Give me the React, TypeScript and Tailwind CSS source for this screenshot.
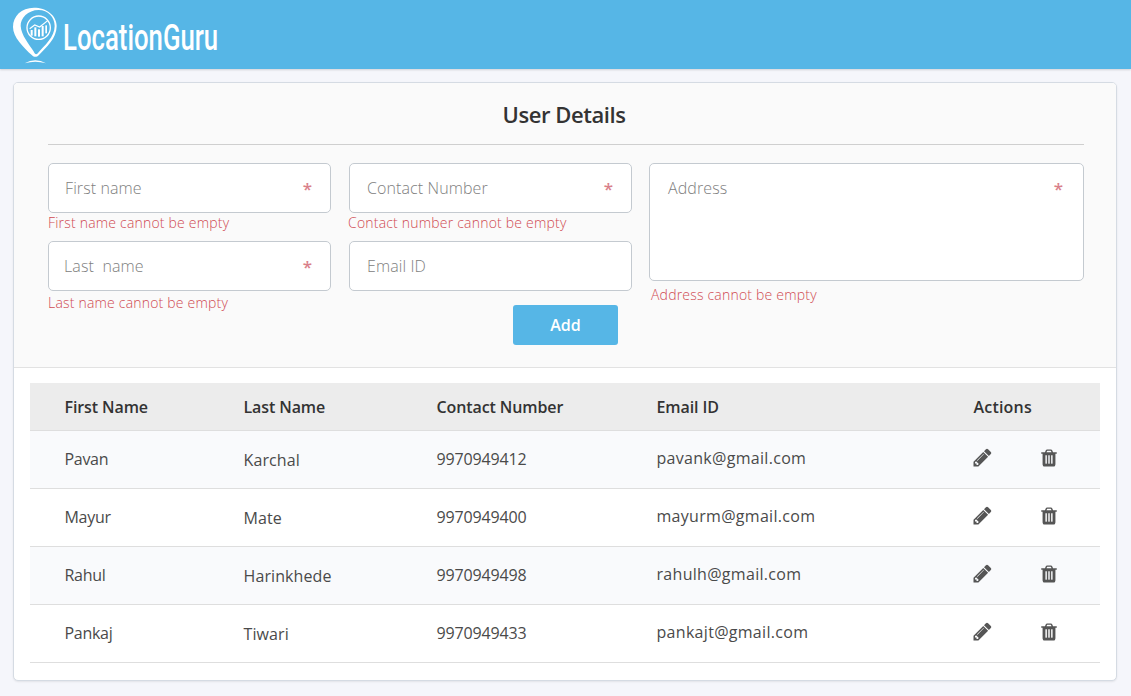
import React from "react";

const font = { fontFamily: '"Open Sans", sans-serif' };

function Logo() {
  return (
    <svg width="60" height="66" viewBox="0 0 180 198" className="mt-[2px] shrink-0 self-start">
      <path
        fill="#fff"
        fillRule="evenodd"
        d="M78 17C40 17 15 42 15 75C15 105 45 135 72 160C78 166 86 166 92 160C115 135 146 110 146 72C146 40 115 17 78 17ZM92 24C120 24 140 45 140 72C140 105 110 130 88 155C84 158 80 156 78 150C62 125 40 100 38 72C37 48 60 24 92 24Z"
      />
      <circle cx="92" cy="77" r="35" fill="none" stroke="#fff" strokeWidth="4" />
      <g fill="#fff">
        <rect x="68" y="84" width="6" height="17" />
        <rect x="79" y="76" width="6" height="27" />
        <rect x="90" y="82" width="6" height="22" />
        <rect x="101" y="72" width="6" height="31" />
        <rect x="112" y="70" width="5" height="24" />
      </g>
      <path d="M65 80L80 69L95 75L119 56" fill="none" stroke="#fff" strokeWidth="3.500" />
      <path d="M50 184Q82 166 114 184Q82 175 50 184Z" fill="#fff" />
    </svg>
  );
}

function Pencil() {
  return (
    <svg width="21" height="21" viewBox="0 0 1792 1792" fill="#555" className="ml-[-2px]">
      <path d="M491 1536l91-91-235-235-91 91v107h128v128h107zm523-928q0-22-22-22-10 0-17 7l-542 542q-7 7-7 17 0 22 22 22 10 0 17-7l542-542q7-7 7-17zm-54-192l416 416-832 832h-416v-416zm683 96q0 53-37 90l-166 166-416-416 166-165q36-38 90-38 53 0 91 38l235 234q37 39 37 91z" />
    </svg>
  );
}

function Trash() {
  return (
    <svg width="20" height="20" viewBox="0 0 1792 1792" fill="#555">
      <path d="M704 1376v-704q0-14-9-23t-23-9h-64q-14 0-23 9t-9 23v704q0 14 9 23t23 9h64q14 0 23-9t9-23zm256 0v-704q0-14-9-23t-23-9h-64q-14 0-23 9t-9 23v704q0 14 9 23t23 9h64q14 0 23-9t9-23zm256 0v-704q0-14-9-23t-23-9h-64q-14 0-23 9t-9 23v704q0 14 9 23t23 9h64q14 0 23-9t9-23zm-544-992h448l-48-117q-7-9-17-11h-317q-10 2-17 11zm928 32v64q0 14-9 23t-23 9h-96v948q0 83-47 143.500t-113 60.500h-832q-66 0-113-58.500t-47-141.500v-952h-96q-14 0-23-9t-9-23v-64q0-14 9-23t23-9h309l70-167q15-37 54-63t79-26h320q40 0 79 26t54 63l70 167h309q14 0 23 9t9 23z" />
    </svg>
  );
}

function Field({
  label,
  required = true,
  tall = false,
  inset = "pl-[17px]",
}: {
  label: string;
  required?: boolean;
  tall?: boolean;
  inset?: string;
}) {
  return (
    <div
      className={`flex items-start justify-between rounded-[5px] border border-[#c4cad0] bg-white pt-[12px] ${inset} ${tall ? "h-[118px] pr-[20px]" : "h-[50px] pr-[18px]"}`}
    >
      <span className="whitespace-pre text-[16px] font-light leading-[24px] tracking-[0.1px] text-[#808080]">{label}</span>
      {required && <span className="pt-[1px] text-[17px] font-semibold leading-[24px] text-[#d9808a]">*</span>}
    </div>
  );
}

function Err({ children, className = "" }: { children: React.ReactNode; className?: string }) {
  return <div className={`text-[14px] font-light leading-[20px] tracking-[0.2px] text-[#d04a52] ${className}`}>{children}</div>;
}

const rows = [
  ["Pavan", "Karchal", "9970949412", "pavank@gmail.com"],
  ["Mayur", "Mate", "9970949400", "mayurm@gmail.com"],
  ["Rahul", "Harinkhede", "9970949498", "rahulh@gmail.com"],
  ["Pankaj", "Tiwari", "9970949433", "pankajt@gmail.com"],
];

const cols = "grid grid-cols-[179px_193px_220px_317px_1fr] pl-[34.5px] items-center";

export default function App() {
  return (
    <div className="min-h-[696px] bg-[#f5f6fb]" style={font}>
      <header className="flex h-[69px] items-center bg-[#56b6e6] pl-[8px] shadow-[0_1px_2px_rgba(0,0,0,0.15)]">
        <Logo />
        <span className="ml-[-5px] mt-[6px] inline-block origin-left scale-x-[0.715] whitespace-nowrap text-[36px] font-medium leading-[40px] text-white [font-family:Roboto,sans-serif]">
          LocationGuru
        </span>
      </header>
      <main className="pl-[13px] pr-[14px] pt-[13px]">
        <div className="h-[599px] overflow-hidden rounded-[5px] border border-[#d5dbe3] bg-white shadow-[0_1px_2px_rgba(0,0,0,0.08)]">
          <section className="h-[285px] border-b border-[#e2e2e2] bg-[#fafafa] pl-[34px] pr-[32px]">
            <h1 className="flex h-[62px] items-center justify-center border-b border-[#cfcfcf] pr-[4px] pt-[2px] text-[22px] font-semibold tracking-[-0.45px] text-[#333]">
              User Details
            </h1>
            <div className="mt-[18px] flex">
              <div className="w-[283px]">
                <Field label="First name" inset="pl-[16px]" />
                <Err className="h-[28px]">First name cannot be empty</Err>
                <Field label="Last  name" inset="pl-[15px]" />
                <Err className="mt-[2px]">Last name cannot be empty</Err>
              </div>
              <div className="ml-[18px] w-[283px]">
                <Field label="Contact Number" />
                <Err className="ml-[-1px] h-[28px]">Contact number cannot be empty</Err>
                <Field label="Email ID" required={false} />
                <button className="ml-[164px] mt-[14px] h-[40px] w-[105px] rounded-[3px] bg-[#56b6e6] text-[16px] font-semibold text-white">
                  Add
                </button>
              </div>
              <div className="ml-[17px] w-[435px]">
                <Field label="Address" tall inset="pl-[18px]" />
                <Err className="ml-[2px] mt-[4px]">Address cannot be empty</Err>
              </div>
            </div>
          </section>
          <section className="px-[16px] pt-[15px]">
            <div className={`${cols} h-[48px] border-b border-[#dedede] bg-[#ececec] text-[16px] font-semibold tracking-[-0.1px] text-[#333]`}>
              <div>First Name</div>
              <div>Last Name</div>
              <div>Contact Number</div>
              <div>Email ID</div>
              <div className="tracking-[0.2px]">Actions</div>
            </div>
            {rows.map((r, i) => (
              <div
                key={r[0]}
                className={`${cols} h-[58px] border-b border-[#dedede] text-[16px] text-[#4a4a4a] ${i % 2 === 0 ? "bg-[#f9fafc]" : "bg-white"}`}
              >
                <div className="pb-[2px] tracking-[-0.3px]">{r[0]}</div>
                <div className="tracking-[0.1px]">{r[1]}</div>
                <div className="pb-[2px] tracking-[-0.15px]">{r[2]}</div>
                <div className="pb-[4px] tracking-[0.3px]">{r[3]}</div>
                <div className="flex items-center gap-[46px] pb-[4px]">
                  <Pencil />
                  <Trash />
                </div>
              </div>
            ))}
          </section>
        </div>
      </main>
    </div>
  );
}
